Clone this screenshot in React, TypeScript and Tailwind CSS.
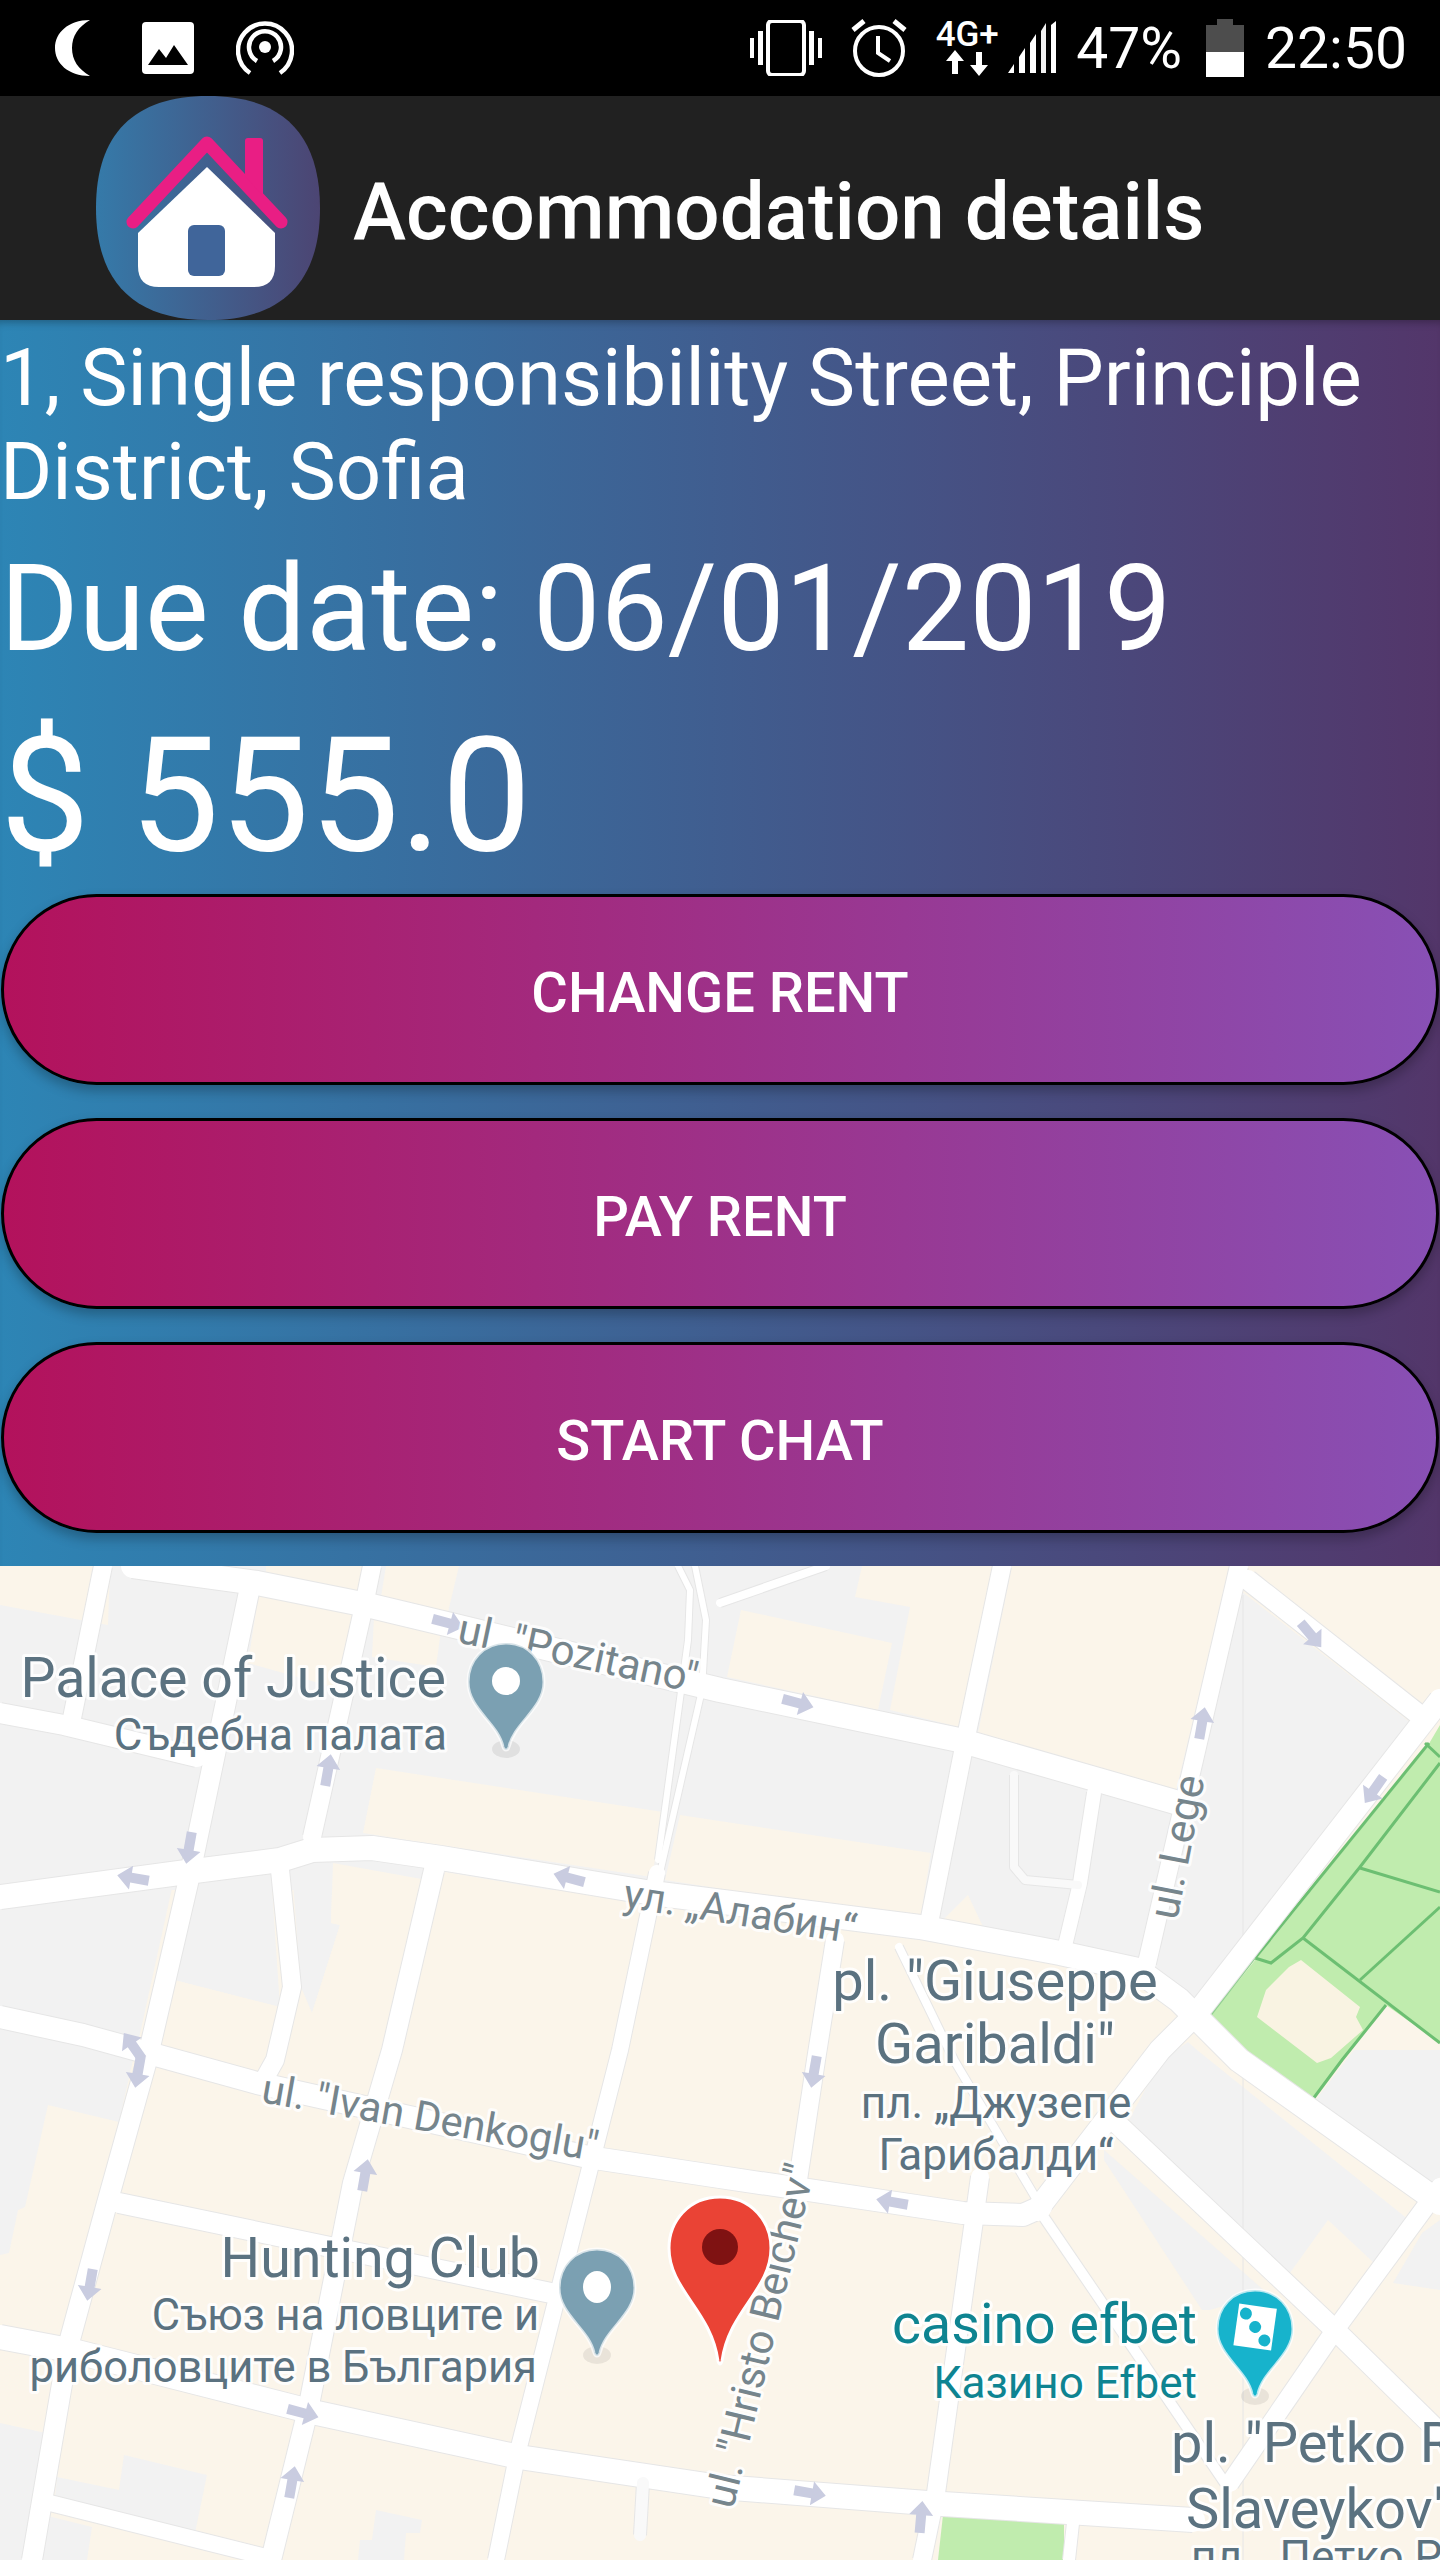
const grayAreas = [
  '0,1566 1240,1566 1147,1963 929,1923 720,1890 0,1890',
  '0,1890 172,1888 138,2043 133,2060 119,2122 48,2105 25,2207 18,2210 9,2253 0,2255',
  '193,1883 271,1873 280,2007 174,1980',
  '292,1870 333,1863 331,1923 340,1925 312,2013 301,1987',
  '0,2423 46,2433 23,2560 0,2560',
  '124,2455 207,2475 195,2533 55,2497 57,2477 119,2490',
  '44,2515 92,2527 87,2560 23,2560',
  '376,2510 422,2520 420,2533 406,2533 404,2560 358,2560 360,2540 372,2540',
  '1240,1590 1411,1723 1189,2007 1154,1967',
  '1188,2042 1197,2050 1409,2220 1374,2263 1328,2220 1287,2277 1129,2120 1161,2060',
  '1104,2150 1267,2293 1210,2310 1202,2310 1104,2160',
  '1354,2050 1440,2050 1440,2177 1422,2197 1312,2105',
  '1422,2233 1440,2220 1440,2290 1393,2283',
]

const beigeAreas = [
  '0,1566 110,1566 108,1625 0,1605',
  '266,1566 367,1566 360,1592 266,1572',
  '386,1566 459,1566 448,1612 381,1597',
  '259,1592 356,1612 344,1690 248,1663',
  '374,1617 441,1630 436,1667 372,1657',
  '376,1768 663,1812 652,1877 427,1843 363,1833',
  '680,1815 931,1853 920,1920 665,1880',
  '445,1872 650,1907 620,1960 600,2060 381,2060',
  '333,1863 427,1880 381,2060 285,2060 312,2013 340,1925 331,1923',
  '174,1980 280,2007 266,2060 156,2060',
  '741,1610 892,1643 878,1710 727,1677',
  '862,1566 993,1566 959,1727 890,1710 910,1607 855,1597',
  '1012,1566 1230,1566 1175,1795 975,1748',
  '1252,1566 1440,1566 1440,1690 1422,1710 1250,1580',
  '940,1923 968,1895 986,1933',
]

const roads: { d: string; w: number; soft?: boolean }[] = [
  { d: '133,1566 257,1583 367,1605 459,1627 720,1690 959,1740 1175,1802', w: 24 },
  { d: '0,1897 179,1873 280,1860 312,1850 372,1848 441,1858 652,1893 920,1927 1060,1953 1138,1970 1179,2000 1239,2060 1440,2203', w: 24 },
  { d: '1110,2117 1335,2330 1440,2433', w: 20 },
  { d: '1248,1580 1422,1717', w: 20 },
  { d: '1440,1700 1197,2013 1160,2050 1037,2210', w: 22 },
  { d: '103,1566 71,1723', w: 18 },
  { d: '0,1713 64,1725 197,1757', w: 20 },
  { d: '250,1587 188,1883 147,2060 106,2207 69,2343 32,2560', w: 20 },
  { d: '372,1566 363,1610 312,1837', w: 18 },
  { d: '280,1870 292,1987 275,2060 261,2085', w: 18 },
  { d: '434,1870 392,2050 353,2183 308,2410 271,2560', w: 20 },
  { d: '678,1566 690,1590 688,1640 658,1860', w: 6 },
  { d: '695,1566 706,1620 702,1690 660,1873', w: 6 },
  { d: '657,1873 620,2050 519,2447 496,2560', w: 16 },
  { d: '0,2017 83,2035 257,2083 588,2157 720,2177 963,2213 1023,2215 1041,2207', w: 22 },
  { d: '119,2203 551,2293', w: 20 },
  { d: '0,2337 69,2350 317,2413 519,2457 720,2487 927,2503 1193,2520', w: 24 },
  { d: '50,2503 266,2557', w: 16 },
  { d: '835,1940 816,2060 798,2180', w: 18 },
  { d: '1002,1566 966,1737 929,1923', w: 18 },
  { d: '899,1947 954,2060 1037,2200', w: 8 },
  { d: '1041,2213 1225,2483', w: 10 },
  { d: '980,2177 975,2213 936,2493 922,2560', w: 18 },
  { d: '1239,1566 1184,1803 1147,1963', w: 18 },
  { d: '1094,1793 1080,1883 1064,1950', w: 14 },
  { d: '1014,1775 1014,1867 1025,1880 1078,1885', w: 8, soft: true },
  { d: '720,1603 826,1566', w: 8 },
  { d: '1440,2187 1335,2330 1230,2483', w: 18 },
  { d: '1073,2523 1069,2560', w: 12 },
  { d: '643,2483 640,2535', w: 12, soft: true },
]

const parkLines = [
  '1255,1958 1429,1743',
  '1255,1958 1271,1963 1303,1938 1360,1867 1440,1763',
  '1425,1743 1440,1757',
  '1360,1868 1440,1892',
  '1303,1938 1440,2043',
  '1360,1980 1440,1907',
  '1386,2005 1342,2060 1310,2103',
]

const arrows: [number, number, number][] = [
  [448, 1623, 15], [328, 1770, -80], [189, 1848, 100], [133, 1878, 190], [569, 1878, 195],
  [133, 2046, -125], [138, 2072, 100], [365, 2175, -80], [90, 2285, 100], [303, 2413, 15],
  [292, 2482, -80], [798, 1703, 15], [1202, 1723, -80], [1311, 1635, 50], [1374, 1790, 125],
  [814, 2072, 100], [892, 2202, 190], [810, 2493, 10], [921, 2517, -85],
]

type Label = { t: string; x: number; y: number; s: number; a?: 'start' | 'middle' | 'end'; r?: number; c?: string }

const slate = '#5b7280'
const road = '#76858c'
const teal = '#0e8491'

const labels: Label[] = [
  { t: 'ul. "Pozitano"', x: 456, y: 1642, s: 42, r: 12, c: road },
  { t: 'Palace of Justice', x: 446, y: 1697, s: 55.5, a: 'end' },
  { t: 'Съдебна палата', x: 447, y: 1750, s: 44, a: 'end' },
  { t: 'ул. „Алабин“', x: 622, y: 1907, s: 41, r: 9, c: road },
  { t: 'ul. Lege', x: 1177, y: 1921, s: 42, r: -79, c: road },
  { t: 'pl. "Giuseppe', x: 995, y: 2000, s: 56, a: 'middle' },
  { t: 'Garibaldi"', x: 995, y: 2063, s: 56, a: 'middle' },
  { t: 'пл. „Джузепе', x: 996, y: 2118, s: 44, a: 'middle' },
  { t: 'Гарибалди“', x: 996, y: 2170, s: 44, a: 'middle' },
  { t: 'ul. "Ivan Denkoglu"', x: 260, y: 2102, s: 41.5, r: 10, c: road },
  { t: 'Hunting Club', x: 540, y: 2277, s: 55.5, a: 'end' },
  { t: 'Съюз на ловците и', x: 539, y: 2330, s: 43.5, a: 'end' },
  { t: 'риболовците в България', x: 537, y: 2382, s: 43.5, a: 'end' },
  { t: 'ul. "Hristo Beichev"', x: 733, y: 2510, s: 42, r: -76.5, c: road },
  { t: 'casino efbet', x: 1197, y: 2343, s: 55.5, a: 'end', c: teal },
  { t: 'Казино Efbet', x: 1197, y: 2398, s: 44, a: 'end', c: teal },
  { t: 'pl. "Petko R', x: 1171, y: 2462, s: 56 },
  { t: 'Slaveykov"', x: 1186, y: 2528, s: 56 },
  { t: 'пл. „Петко Р', x: 1191, y: 2572, s: 44 },
]

const pinPath = 'M0,-38 C22,-38 38,-21 38,1 C38,28 8,42 3,66 C2,70 -2,70 -3,66 C-8,42 -38,28 -38,1 C-38,-21 -22,-38 0,-38Z'

function MapPin({ x, y, color }: { x: number; y: number; color: string }) {
  return (
    <g transform={`translate(${x} ${y})`}>
      <ellipse cx="0" cy="68" rx="14" ry="9" fill="#000" opacity="0.07" />
      <path d={pinPath} fill={color} stroke="#fff" strokeOpacity="0.7" strokeWidth="3" />
    </g>
  )
}

function CityMap() {
  return (
    <svg viewBox="0 1566 1440 994" className="block w-full h-[994px] font-[Roboto,sans-serif]">
      <rect x="0" y="1566" width="1440" height="994" fill="#fbf5ea" />
      {grayAreas.map((p) => <polygon key={p} points={p} fill="#f2f2f2" />)}
      {beigeAreas.map((p) => <polygon key={p} points={p} fill="#fbf5ea" />)}
      <line x1="1243" y1="1595" x2="1243" y2="2560" stroke="#e6e6e6" strokeWidth="1" />
      <polygon points="1207,2020 1427,1747 1440,1725 1440,2043 1386,2005 1310,2103 1243,2050" fill="#c0ecae" />
      <polygon points="1301,1960 1360,2007 1356,2017 1363,2030 1331,2058 1317,2063 1257,2017 1266,1990 1289,1967" fill="#f9f3e2" />
      <polygon points="943,2515 1064,2523 1064,2560 938,2560" fill="#c0ecae" />
      {parkLines.map((p) => <polyline key={p} points={p} fill="none" stroke="#6cbf72" strokeWidth="3" />)}
      <polyline points="1207,2020 1255,1958" fill="none" stroke="#8fd08f" strokeWidth="2" />
      {roads.map((r) => (
        <polyline key={r.d + 'c'} points={r.d} fill="none" stroke="#e6e6e6" strokeWidth={r.w + 2} strokeLinejoin="round" />
      ))}
      {roads.map((r) => (
        <polyline key={r.d} points={r.d} fill="none" stroke={r.soft ? '#f9f9f9' : '#fff'} strokeWidth={r.w} strokeLinejoin="round" strokeLinecap="round" />
      ))}
      {arrows.map(([x, y, r]) => (
        <path key={`${x}-${y}`} transform={`translate(${x} ${y}) rotate(${r})`} d="M-16,-5 H2 V-12 L16,0 L2,12 V5 H-16Z" fill="#c9cce0" />
      ))}
      {labels.map((l) => (
        <text
          key={l.t}
          x={l.x}
          y={l.y}
          fontSize={l.s}
          textAnchor={l.a ?? 'start'}
          transform={l.r ? `rotate(${l.r} ${l.x} ${l.y})` : undefined}
          fill={l.c ?? slate}
          stroke="#fff"
          strokeOpacity="0.85"
          strokeWidth="6"
          strokeLinejoin="round"
          className="[paint-order:stroke]"
        >
          {l.t}
        </text>
      ))}
      <MapPin x={506} y={1681} color="#7ba0b2" />
      <circle cx="506" cy="1681" r="14" fill="#fff" />
      <MapPin x={597} y={2287} color="#7ba0b2" />
      <ellipse cx="597" cy="2287" rx="14" ry="16" fill="#fff" />
      <MapPin x={1255} y={2328} color="#17b3cc" />
      <g transform="translate(1255 2328) rotate(8)">
        <rect x="-19" y="-22" width="38" height="42" fill="#fff" />
        <circle cx="-11" cy="-13" r="6" fill="#17b3cc" />
        <circle cx="0" cy="-1" r="6" fill="#17b3cc" />
        <circle cx="11" cy="11" r="6" fill="#17b3cc" />
      </g>
      <path
        d="M720,2197 C752,2197 771,2222 771,2248 C771,2290 729,2310 722,2361 C721,2365 719,2365 718,2361 C711,2310 669,2290 669,2248 C669,2222 688,2197 720,2197Z"
        fill="#ea4335"
        stroke="#fff"
        strokeWidth="3"
      />
      <circle cx="720" cy="2247" r="18" fill="#7f1212" />
    </svg>
  )
}

function StatusBar() {
  return (
    <div className="h-24 bg-black flex items-center text-white">
      {/* moon */}
      <svg width="40" height="58" viewBox="0 0 40 58" className="ml-[54px]">
        <path d="M36 1 C14 1 1 14 1 29 C1 44 14 57 36 57 C24 50 18 41 18 29 C18 17 24 8 36 1Z" fill="#fff" />
      </svg>
      {/* image */}
      <svg width="52" height="52" viewBox="0 0 52 52" className="ml-[48px]">
        <rect x="0" y="0" width="52" height="52" rx="4" fill="#fff" />
        <path d="M6 43 L17 27 L24 36 L32 23 L46 43Z" fill="#000" />
      </svg>
      {/* hotspot */}
      <svg width="58" height="54" viewBox="0 0 58 54" className="ml-[42px]" fill="none" stroke="#fff" strokeWidth="4.5">
        <circle cx="29" cy="26" r="6" fill="#fff" stroke="none" />
        <path d="M21 40 A16 16 0 1 1 37 40" />
        <path d="M14 52 A27 27 0 1 1 44 52" />
      </svg>
      <div className="ml-auto flex items-center">
        {/* vibrate */}
        <svg width="72" height="56" viewBox="0 0 72 56" fill="#fff">
          <rect x="0" y="18" width="4" height="20" />
          <rect x="8" y="11" width="5" height="34" />
          <rect x="18" y="1" width="36" height="54" rx="4" fill="none" stroke="#fff" strokeWidth="4" />
          <rect x="59" y="11" width="5" height="34" />
          <rect x="68" y="18" width="4" height="20" />
        </svg>
        {/* alarm */}
        <svg width="56" height="60" viewBox="0 0 56 60" className="ml-[29px]" fill="none" stroke="#fff" strokeWidth="4">
          <circle cx="28" cy="33" r="24" />
          <path d="M27 18 V35 L39 43" />
          <path d="M2 12 L13 3 M54 12 L43 3" strokeWidth="5" />
        </svg>
        {/* network type */}
        <div className="ml-[30px] w-[60px] h-14 flex flex-col items-center">
          <span className="font-[Roboto,sans-serif] font-medium text-[35px] leading-[30px]">4G+</span>
          <svg width="44" height="26" viewBox="0 0 44 26" fill="#fff">
            <path d="M10 0 L19 11 H13 V24 H7 V11 H1Z" />
            <path d="M34 26 L25 15 H31 V2 H37 V15 H43Z" />
          </svg>
        </div>
        {/* signal */}
        <svg width="48" height="54" viewBox="0 0 48 54" className="ml-[11px]" fill="#fff">
          <path d="M0 52 L6 43 V52Z" />
          <path d="M11 52 V36 L17 27 V52Z" />
          <path d="M22 52 V22 L28 13 V52Z" />
          <path d="M33 52 V10 L38 2 V52Z" opacity="0.95" />
          <path d="M43 52 V4 L48 0 V52Z" />
        </svg>
        <span className="ml-[20px] text-[57px] leading-none font-[Roboto,sans-serif]">47%</span>
        {/* battery */}
        <div className="ml-[24px] w-[38px] h-[58px] flex flex-col items-center">
          <div className="w-[16px] h-[6px] bg-[#4d4d4d]" />
          <div className="w-full h-[27px] bg-[#4d4d4d]" />
          <div className="w-full h-[25px] bg-white" />
        </div>
        <span className="ml-[21px] mr-[33px] text-[57px] leading-none font-[Roboto,sans-serif]">22:50</span>
      </div>
    </div>
  )
}

function HouseLogo() {
  return (
    <svg width="224" height="224" viewBox="0 0 224 224" className="ml-[96px] shrink-0">
      <defs>
        <linearGradient id="logoBg" x1="0" x2="1" y1="0" y2="0">
          <stop offset="0" stopColor="#357aa9" />
          <stop offset="1" stopColor="#4c4573" />
        </linearGradient>
      </defs>
      <path d="M112 0 C186 0 224 38 224 112 C224 186 186 224 112 224 C38 224 0 186 0 112 C0 38 38 0 112 0Z" fill="url(#logoBg)" />
      <path d="M111 71 L179 137 V170 Q179 191 158 191 H63 Q42 191 42 170 V137Z" fill="#fff" />
      <rect x="92" y="129" width="37" height="51" rx="6" fill="#40659a" />
      <path d="M37 126 L111 47 L185 126" fill="none" stroke="#e91e84" strokeWidth="13" strokeLinecap="round" strokeLinejoin="round" />
      <path d="M149 45 Q149 42 152 42 H164 Q167 42 167 45 V100 L149 80Z" fill="#e91e84" />
    </svg>
  )
}

function RentButton({ label }: { label: string }) {
  return (
    <button className="h-[191px] w-full pt-[6px] rounded-[96px] border-[3px] border-black bg-[linear-gradient(to_right,#b3125c,#8850b5)] text-white text-[56px] font-medium font-[Roboto,sans-serif] shadow-[0_6px_12px_rgba(0,0,0,0.25)]">
      {label}
    </button>
  )
}

export default function App() {
  return (
    <div className="w-[1440px] h-[2560px] overflow-hidden font-[Roboto,sans-serif]">
      <StatusBar />
      <header className="h-56 bg-[#212121] flex items-center">
        <HouseLogo />
        <h1 className="ml-[33px] pt-[7px] text-white text-[80px] font-medium leading-none">Accommodation details</h1>
      </header>
      <main className="h-[1246px] bg-[linear-gradient(to_right,#2d85b5,#53366a)] text-white flex flex-col shadow-[inset_0_8px_8px_-6px_rgba(0,0,0,0.3)]">
        <p className="pt-[11px] text-[79.7px] leading-[94px]">1, Single responsibility Street, Principle District, Sofia</p>
        <p className="mt-[20px] text-[120px] leading-[141px]">Due date: 06/01/2019</p>
        <p className="mt-[22px] text-[160px] leading-[188px]">$ 555.0</p>
        <div className="mt-auto mb-[33px] px-px flex flex-col gap-[33px]">
          <RentButton label="CHANGE RENT" />
          <RentButton label="PAY RENT" />
          <RentButton label="START CHAT" />
        </div>
      </main>
      <CityMap />
    </div>
  )
}
